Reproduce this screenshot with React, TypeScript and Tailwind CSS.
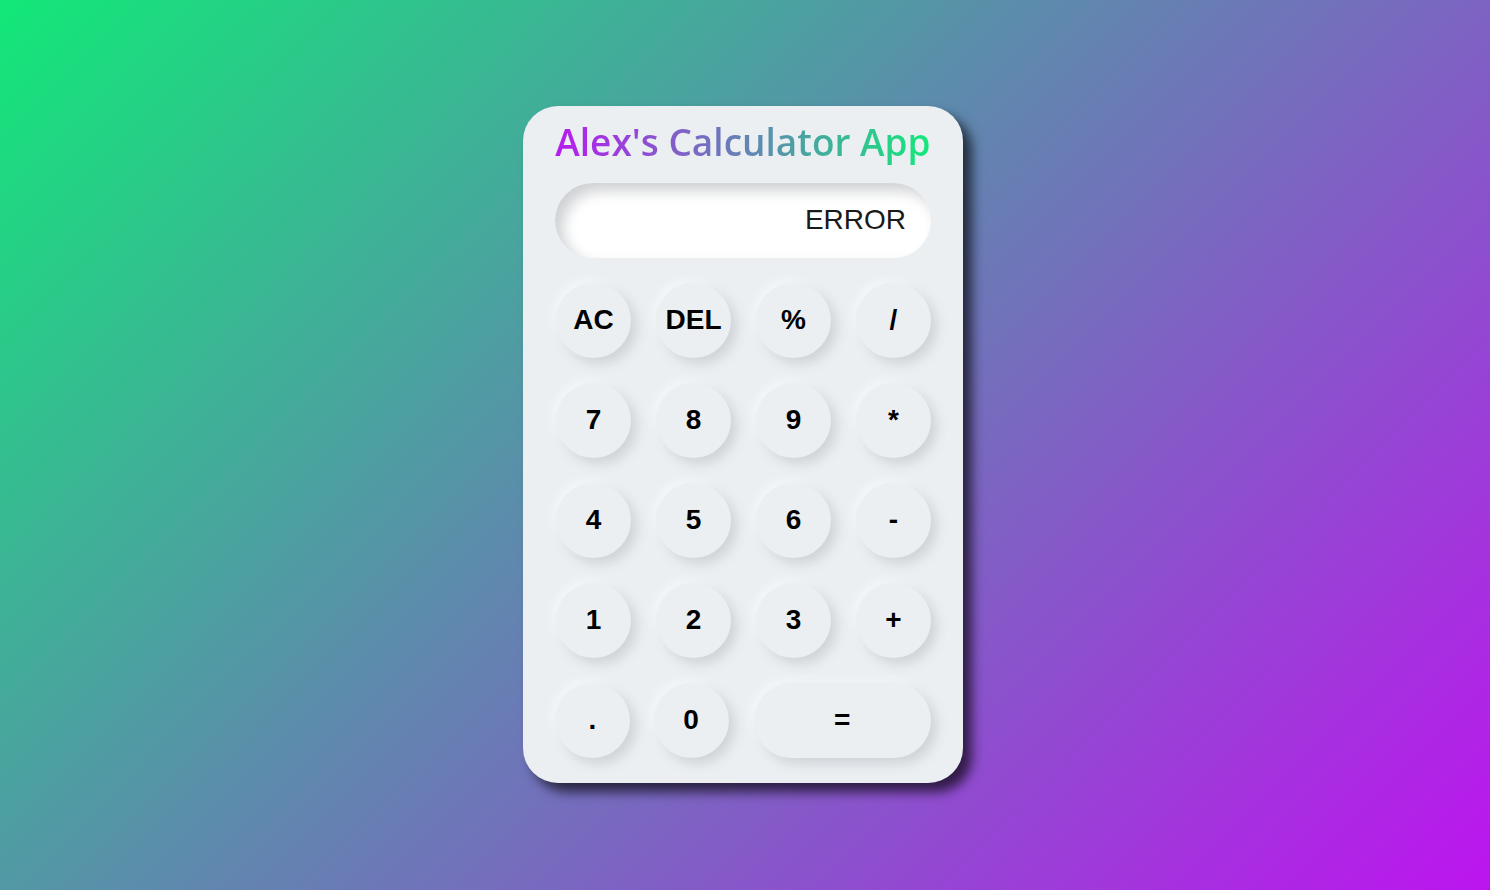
import React from 'react';

const rows = [
  ['AC', 'DEL', '%', '/'],
  ['7', '8', '9', '*'],
  ['4', '5', '6', '-'],
  ['1', '2', '3', '+'],
];

const btn =
  "h-[75px] rounded-full bg-[#ebeff2] flex items-center justify-center text-[28px] font-bold text-black shadow-[6px_6px_12px_#d0d3d7,-4px_-4px_10px_rgba(255,255,255,0.5)]";

export default function App() {
  return (
    <div className="min-h-screen w-full flex items-center justify-center bg-[linear-gradient(135deg,#12e878,#bd14ef)] font-['Liberation_Sans',Arial,sans-serif]">
      <div className="w-[440px] h-[677px] -ml-[4px] -mt-[2px] rounded-[35px] bg-[#ebeff2] shadow-[9px_9px_12px_rgba(0,0,0,0.65)] pt-[9px] px-[32px]">
        <h1 className="h-[54px] text-center text-[37px] leading-[54px] font-semibold font-['Open_Sans',sans-serif] bg-[linear-gradient(to_right,#b61cef,#13e97a)] bg-clip-text text-transparent">
          Alex's Calculator App
        </h1>
        <div className="mt-[14px] h-[75px] rounded-full bg-white shadow-[inset_8px_8px_14px_#cfd1d4] flex items-center justify-end pr-[25px] text-[28px] text-[#1a1a1a]">
          ERROR
        </div>
        <div className="mt-[25px] flex flex-col gap-[25px]">
          {rows.map((row, i) => (
            <div key={i} className="grid grid-cols-4 gap-[25px] pl-[1px]">
              {row.map((k) => (
                <button key={k} className={btn}>{k}</button>
              ))}
            </div>
          ))}
          <div className="flex">
            <button className={btn + " w-[75px]"}>.</button>
            <button className={btn + " w-[75px] ml-[24px]"}>0</button>
            <button className={btn + " w-[178px] ml-[25px]"}>=</button>
          </div>
        </div>
      </div>
    </div>
  );
}
